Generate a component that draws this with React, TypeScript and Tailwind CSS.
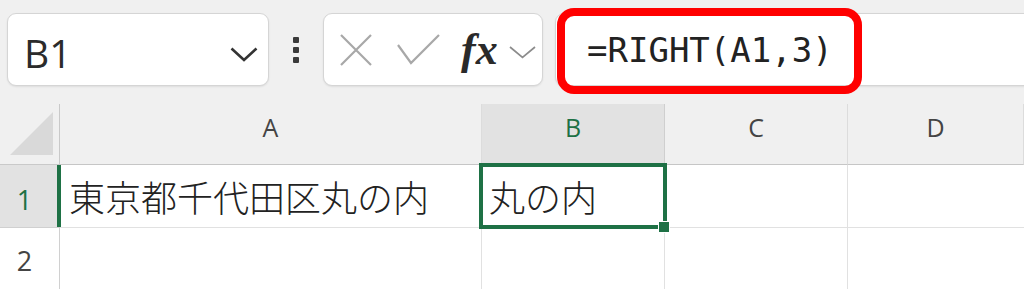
export default function App() {
  const uiFont = { fontFamily: '"Open Sans", "Noto Sans", sans-serif' };
  const jpFont = { fontFamily: '"Noto Sans CJK JP", "Noto Sans", sans-serif', fontWeight: 300 };

  return (
    <div className="relative h-[289px] w-[1024px] overflow-hidden bg-[#f0f0f0]" style={uiFont}>
      {/* formula bar */}
      <div className="flex h-[104px] items-start pl-[7px] pt-[13px]">
        <div className="flex h-[73px] w-[262px] shrink-0 items-center justify-between rounded-[9px] border border-[#d5d5d5] bg-white pl-[16px] pr-[10px] shadow-[0_1px_2px_rgba(0,0,0,0.08)]">
          <span className="pt-[6px] text-[39px] leading-none text-[#2b2b2b]">B1</span>
          <svg width="28" height="15" viewBox="0 0 28 15" className="mt-[10px]">
            <path d="M1.5 1.5 L14 13 L26.5 1.5" fill="none" stroke="#333" strokeWidth="2.6" />
          </svg>
        </div>

        <div className="ml-[24px] mt-[24px] flex w-[6px] shrink-0 flex-col gap-[4px]">
          <span className="h-[6px] w-[6px] rounded-[1px] bg-[#3a3a3a]" />
          <span className="h-[6px] w-[6px] rounded-[1px] bg-[#3a3a3a]" />
          <span className="h-[6px] w-[6px] rounded-[1px] bg-[#3a3a3a]" />
        </div>

        <div className="ml-[24px] flex h-[73px] w-[220px] shrink-0 items-center rounded-[9px] border border-[#d5d5d5] bg-white pl-[16px] shadow-[0_1px_2px_rgba(0,0,0,0.08)]">
          <svg width="32" height="32" viewBox="0 0 32 32">
            <path d="M1 1 L31 31 M31 1 L1 31" stroke="#a8a8a8" strokeWidth="2.2" />
          </svg>
          <svg width="43" height="31" viewBox="0 0 43 31" className="ml-[25px]">
            <path d="M1 11 L14 29 L42 1" fill="none" stroke="#a8a8a8" strokeWidth="2.2" />
          </svg>
          <span
            className="ml-[21px] text-[44px] italic leading-none text-[#2a2a2a]"
            style={{ fontFamily: '"Liberation Serif", "DejaVu Serif", serif', fontWeight: 600 }}
          >
            fx
          </span>
          <svg width="27" height="13" viewBox="0 0 27 13" className="ml-[11px] mt-[6px]">
            <path d="M1 1 L13.5 11.5 L26 1" fill="none" stroke="#8c8c8c" strokeWidth="1.7" />
          </svg>
        </div>

        <div className="ml-[12px] flex h-[73px] w-[520px] shrink-0 items-center rounded-[9px] border border-[#d5d5d5] bg-white pl-[31px] shadow-[0_1px_2px_rgba(0,0,0,0.08)]">
          <span
            className="text-[34px] leading-none text-[#222]"
            style={{ fontFamily: '"DejaVu Sans Mono", "Liberation Mono", monospace' }}
          >
            =RIGHT(A1,3)
          </span>
        </div>
      </div>

      {/* red highlight around the formula */}
      <div className="absolute left-[557px] top-[8px] h-[86px] w-[305px] rounded-[17px] border-[8px] border-[#ff0000]" />

      {/* sheet */}
      <div className="grid h-[185px] grid-cols-[60px_422px_183px_183px_1fr] grid-rows-[61px_63px_1fr]">
        {/* header row */}
        <div className="flex items-end border-b border-r border-[#c9c9c9] pb-[9px] pl-[10px]">
          <svg width="44" height="43" viewBox="0 0 44 43">
            <path d="M43 0 L43 43 L0 43 Z" fill="#d9d9d9" />
          </svg>
        </div>
        <div className="flex items-center justify-center border-b border-r border-b-[#c6c6c6] border-r-[#dcdcdc] pb-[12px] text-[25px] text-[#444]">
          A
        </div>
        <div className="flex items-center justify-center border-b border-r border-b-[#c6c6c6] border-r-[#cfcfcf] bg-[#e2e2e2] pb-[12px] text-[25px] text-[#1e7145]">
          B
        </div>
        <div className="flex items-center justify-center border-b border-r border-b-[#c6c6c6] border-r-[#dcdcdc] pb-[12px] text-[25px] text-[#444]">
          C
        </div>
        <div className="flex items-center justify-center border-b border-r border-b-[#c6c6c6] border-r-[#dcdcdc] pb-[12px] text-[25px] text-[#444]">
          D
        </div>

        {/* row 1 */}
        <div className="relative flex items-center justify-center border-b border-r border-[#d0d0d0] bg-[#e2e2e2] pr-[10px] pt-[8px] text-[27px] text-[#1e7145]">
          1
          <span className="absolute -right-[2px] top-0 h-full w-[4px] bg-[#1e7145]" />
        </div>
        <div className="flex items-center border-b border-r border-[#e1e1e1] bg-white pl-[9px] text-[36px] leading-none text-[#222]" style={jpFont}>
          東京都千代田区丸の内
        </div>
        <div className="relative flex items-center border-b border-r border-[#e1e1e1] bg-white pl-[7px] text-[36px] leading-none text-[#222]" style={jpFont}>
          丸の内
          <span className="absolute -bottom-[2px] -left-[3px] -right-[3px] -top-[2px] border-[4px] border-[#1e7145]" />
          <span className="absolute left-[176px] top-[56px] h-[12px] w-[12px] border border-white bg-[#1e7145]" />
        </div>
        <div className="border-b border-r border-[#e1e1e1] bg-white" />
        <div className="border-b border-[#e1e1e1] bg-white" />

        {/* row 2 */}
        <div className="flex items-center justify-center border-r border-[#d0d0d0] bg-white pr-[10px] pt-[6px] text-[27px] text-[#444]">
          2
        </div>
        <div className="border-r border-[#e1e1e1] bg-white" />
        <div className="border-r border-[#e1e1e1] bg-white" />
        <div className="border-r border-[#e1e1e1] bg-white" />
        <div className="bg-white" />
      </div>
    </div>
  );
}
